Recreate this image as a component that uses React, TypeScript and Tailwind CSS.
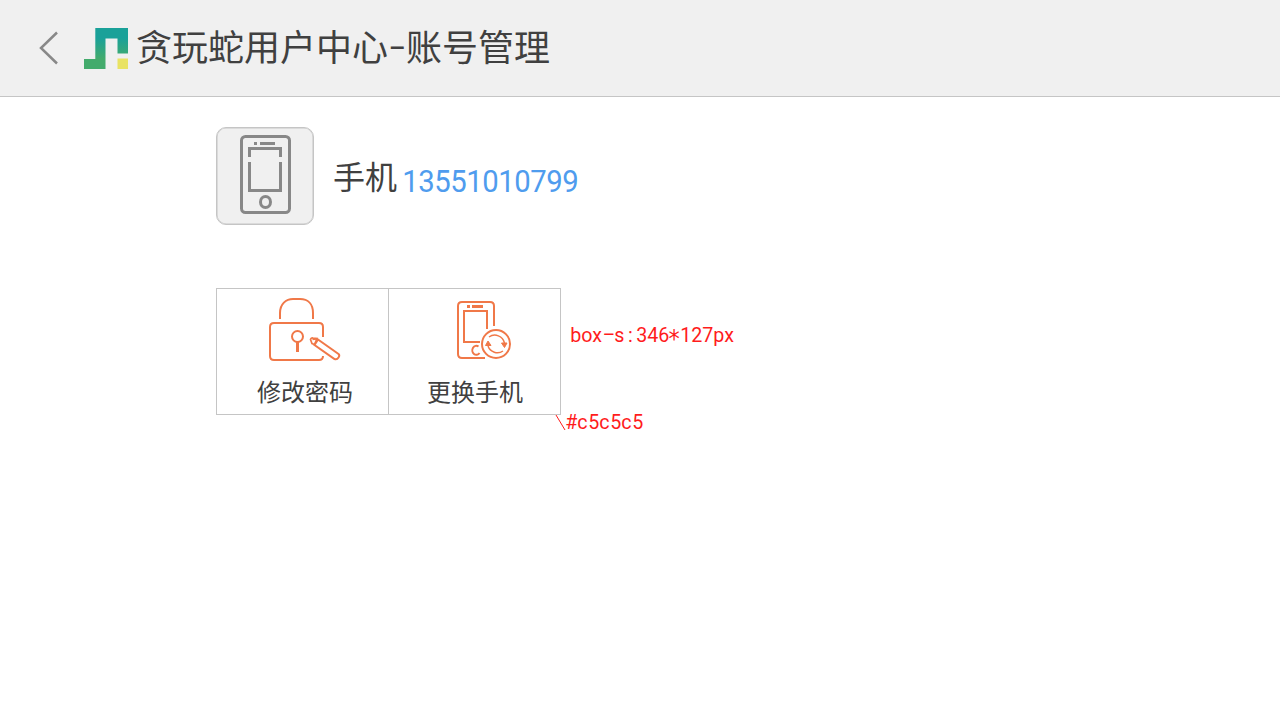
import React from 'react';

function glyphClass(ch: string) {
  if (ch === '-') return 'inline-block scale-x-[1.9] -translate-y-[2px]';
  if (ch === '*') return "inline-block translate-y-[3px] scale-x-[1.1] scale-y-[1.25] font-['DejaVu_Sans']";
  return 'inline-block scale-x-[0.96]';
}

function Mono({ text, cell }: { text: string; cell: string }) {
  return (
    <span className="flex font-['Roboto','Noto_Sans_CJK_SC',sans-serif]">
      {text.split('').map((ch, i) => (
        <span key={i} className={`flex justify-center ${cell}`}>
          <span className={glyphClass(ch)}>{ch}</span>
        </span>
      ))}
    </span>
  );
}

function Logo() {
  return (
    <svg width="44" height="41" viewBox="0 0 44 41" className="shrink-0">
      <defs>
        <linearGradient id="snake" x1="0" y1="0" x2="0" y2="1">
          <stop offset="0.25" stopColor="#1aa199" />
          <stop offset="0.75" stopColor="#43ab6c" />
        </linearGradient>
      </defs>
      <path d="M11.3 0H44V25.5H33.5V10.5H21.5V41H0V31H11.3Z" fill="url(#snake)" />
      <path d="M33.5 30.5H44V41H33.5Z" fill="#e9e363" />
    </svg>
  );
}

function PhoneIcon() {
  return (
    <svg width="51" height="79" viewBox="0 0 51 79" fill="none" stroke="#888" strokeWidth="3">
      <rect x="1.5" y="1.5" width="48" height="76" rx="4" />
      <path d="M14 8.5h3M20 8.5h15" />
      <path d="M9.5 22V13.5H32.5V13.5H32.5H32.5H40.5V22M9.5 27V55.5H32.5H40.5V27" />
      <ellipse cx="25.5" cy="67" rx="5" ry="5.5" />
    </svg>
  );
}

function LockIcon() {
  return (
    <svg width="72" height="64" viewBox="0 0 72 64" fill="none" stroke="#f07848" strokeWidth="2">
      <path d="M11 22V16C11 7 17 2 24 2H31C39 2 44 7 44 16V22" />
      <path d="M54 40V30Q54 26 50 26H5Q1 26 1 30V59Q1 63 5 63H50Q54 63 54 59" />
      <circle cx="28.5" cy="39.5" r="5.5" />
      <path d="M28.5 45V55" strokeWidth="3" />
      <path d="M49 42.5L69.5 57Q71 58.5 69.5 60.5Q68 63 65.5 62L45.5 48Z" />
      <path d="M45.5 47.5L43 46.5L41.5 42.5Q42 40.5 44 41L48 41.5L45.5 47.5M43.5 42.5L46.5 42" strokeWidth="1.7" />
    </svg>
  );
}

function SwapPhoneIcon() {
  return (
    <svg width="56" height="60" viewBox="0 0 56 60" fill="none" stroke="#f07848" strokeWidth="2">
      <path d="M37 26V6Q37 2 33 2H5Q1 2 1 6V54Q1 58 5 58H28" />
      <path d="M10 6.5h3M15 6.5h11" strokeWidth="3" />
      <path d="M30 29V11H7V42H23" />
      <path d="M21.5 46.5A4 4.5 0 1 0 22.5 53" />
      <circle cx="39" cy="44" r="14" />
      <path d="M32 37A10 10 0 0 1 47.5 43M46 51A10 10 0 0 1 31 46" strokeWidth="1.5" />
      <path d="M28.5 45.5L31 41L34 45.5ZM44.5 43H50L47.5 47.5Z" fill="#f07848" strokeWidth="1" />
    </svg>
  );
}

export default function App() {
  return (
    <div className="h-[720px] w-[1280px] overflow-hidden bg-white font-['Noto_Sans_CJK_SC',sans-serif] text-[#404040]">
      <header className="flex h-[97px] items-start border-b border-[#c5c5c5] bg-[#f0f0f0] pl-[39px]">
        <svg width="19" height="34" viewBox="0 0 19 34" fill="none" stroke="#888" strokeWidth="2.5" className="mt-[31px] shrink-0">
          <path d="M18 1.5L2 17L18 32.5" />
        </svg>
        <div className="mt-[28px] ml-[26px]"><Logo /></div>
        <h1 className="mt-[18px] ml-[8px] flex text-[36px] leading-[54px]">
          <span>贪玩蛇用户中心</span>
          <span className="flex w-[18px] justify-center"><span className="inline-block -translate-y-[3px] scale-x-[1.4]">-</span></span>
          <span>账号管理</span>
        </h1>
      </header>
      <main className="pt-[30px] pl-[216px]">
        <section className="flex h-[98px] items-start">
          <div className="flex h-[98px] w-[98px] justify-center rounded-[10px] border border-[#c5c5c5] bg-[#f0f0f0] pt-[7px] shadow-[inset_0_0_0_0.5px_#c5c5c5]">
            <PhoneIcon />
          </div>
          <span className="mt-[25px] ml-[19px] text-[32px] leading-[46px]">手机</span>
          <span className="mt-[33px] ml-[6px] text-[30.5px] leading-[44px] text-[#4f9cee]">
            <Mono text="13551010799" cell="w-[16px]" />
          </span>
        </section>
        <section className="mt-[63px] flex items-start">
          <div className="flex h-[127px] w-[345px] border border-[#c5c5c5]">
            <button className="flex w-[172px] flex-col items-start border-r border-[#c5c5c5] pt-[8px] pl-[40px]">
              <span className="ml-[12px] h-[64px]"><LockIcon /></span>
              <span className="mt-[12px] text-[24px] leading-[36px]">修改密码</span>
            </button>
            <button className="flex flex-1 flex-col items-start pt-[11px] pl-[38px]">
              <span className="ml-[30px] h-[61px]"><SwapPhoneIcon /></span>
              <span className="mt-[12px] text-[24px] leading-[36px]">更换手机</span>
            </button>
          </div>
          <div className="ml-[-6px] w-[190px] pt-[32px] text-[20.5px] leading-[30px] text-[#ff1c1c]">
            <div className="pl-[15px]"><Mono text="box-s:346*127px" cell="w-[11px]" /></div>
            <div className="mt-[57px] flex">
              <svg width="11" height="17" viewBox="0 0 11 17" fill="none" stroke="#ff1c1c" className="mt-[7px] shrink-0">
                <path d="M1 1L10 16" />
              </svg>
              <Mono text="#c5c5c5" cell="w-[11px]" />
            </div>
          </div>
        </section>
      </main>
    </div>
  );
}
